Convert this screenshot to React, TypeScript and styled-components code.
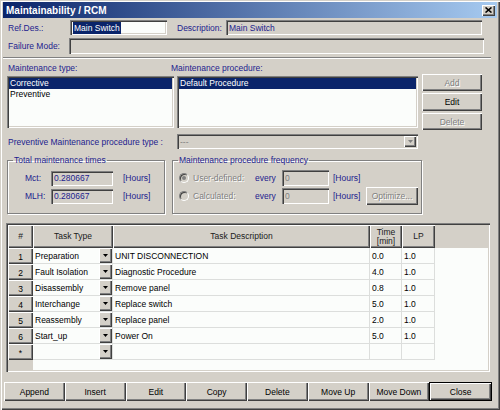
import React from "react";
import styled, { createGlobalStyle, css } from "styled-components";

const FACE = "#d4d0c8";
const NAVY = "#1c1c8e";
const SEL = "#0a246a";

const GlobalStyle = createGlobalStyle`
  html, body { margin: 0; padding: 0; background: ${FACE}; }
  body { font-family: "Liberation Sans", Arial, sans-serif; font-size: 8.5px; color: #000; }
  * { box-sizing: border-box; }
`;

const raised = css`
  box-shadow: inset 1px 1px 0 #fff, inset -1px -1px 0 #404040, inset -2px -2px 0 #808080;
`;
const sunken = css`
  box-shadow: inset 1px 1px 0 #808080, inset 2px 2px 0 #404040, inset -1px -1px 0 #fff,
    inset -2px -2px 0 ${FACE};
`;
const disabledText = css`
  color: #808080;
  text-shadow: 1px 1px 0 #fff;
`;

const Window = styled.div`
  width: 500px;
  height: 410px;
  background: ${FACE};
  padding: 2px 3px 0 3px;
  box-shadow: inset 1px 1px 0 ${FACE}, inset 2px 2px 0 #fff, inset -1px -1px 0 #404040,
    inset -2px -2px 0 #808080;
  display: flex;
  flex-direction: column;
  overflow: hidden;
`;

const TitleBar = styled.div`
  height: 16px;
  display: flex;
  align-items: center;
  justify-content: space-between;
  padding: 0 2px 0 3px;
  background: linear-gradient(to right, ${SEL}, #a6caf0);
  color: #fff;
  font-weight: bold;
  font-size: 10px;
`;

const CloseBtn = styled.div`
  width: 13px;
  height: 11px;
  background: ${FACE};
  ${raised};
  display: flex;
  align-items: center;
  justify-content: center;
`;

const Content = styled.div`
  padding-left: 4px;
  display: flex;
  flex-direction: column;
`;

const Row = styled.div<{ $h: number; $mt: number }>`
  display: flex;
  align-items: center;
  height: ${(p) => p.$h}px;
  margin-top: ${(p) => p.$mt}px;
`;

const Label = styled.span<{ $w?: number; $ml?: number }>`
  color: ${NAVY};
  width: ${(p) => (p.$w ? `${p.$w}px` : "auto")};
  margin-left: ${(p) => p.$ml || 0}px;
  padding-left: 1px;
  white-space: nowrap;
  flex-shrink: 0;
`;

const Field = styled.div<{ $w: number; $h: number; $white?: boolean; $dim?: boolean }>`
  width: ${(p) => p.$w}px;
  height: ${(p) => p.$h}px;
  flex-shrink: 0;
  background: ${(p) => (p.$white ? "#fbfdfb" : FACE)};
  ${sunken};
  display: flex;
  align-items: center;
  padding: 0 3px;
  color: ${(p) => (p.$dim ? "#808080" : NAVY)};
  white-space: nowrap;
  overflow: hidden;
`;

const Selected = styled.span`
  background: ${SEL};
  color: #fff;
  padding: 1px 1px;
`;

const Separator = styled.div`
  margin: 3px 0 0 -4px;
  width: 488px;
  height: 2px;
  border-top: 1px solid #808080;
  border-bottom: 1px solid #fff;
`;

const ListsRow = styled.div`
  display: flex;
  height: 56px;
  gap: 3px;
`;

const ListBox = styled.div<{ $w: number }>`
  width: ${(p) => p.$w}px;
  height: 52px;
  margin-top: 2px;
  background: #fbfdfb;
  ${sunken};
  padding: 2px;
  display: flex;
  flex-direction: column;
`;

const ListItem = styled.div<{ $sel?: boolean }>`
  height: 11px;
  line-height: 11px;
  padding-left: 1px;
  background: ${(p) => (p.$sel ? SEL : "transparent")};
  color: ${(p) => (p.$sel ? "#fff" : "#000")};
`;

const SideButtons = styled.div`
  margin-left: 1px;
  width: 60px;
  display: flex;
  flex-direction: column;
  gap: 2px;
`;

const Button = styled.div<{ $h?: number; $w?: number; $disabled?: boolean; $default?: boolean }>`
  height: ${(p) => p.$h || 18}px;
  width: ${(p) => (p.$w ? `${p.$w}px` : "auto")};
  flex-shrink: 0;
  background: ${FACE};
  display: flex;
  align-items: center;
  justify-content: center;
  white-space: nowrap;
  ${(p) =>
    p.$default
      ? css`
          border: 1px solid #000;
          ${raised};
        `
      : raised};
  ${(p) => (p.$disabled ? disabledText : "color: #000;")}
`;

const Combo = styled(Field)`
  justify-content: space-between;
  padding-right: 2px;
`;

const ComboArrow = styled.div`
  width: 12px;
  height: 11px;
  background: ${FACE};
  ${raised};
  display: flex;
  align-items: center;
  justify-content: center;
`;

const GroupsRow = styled.div`
  display: flex;
  gap: 7px;
  margin-top: 6px;
`;

const Group = styled.fieldset<{ $w: number }>`
  width: ${(p) => p.$w}px;
  height: 59px;
  margin: 0;
  padding: 0;
  min-width: 0;
  border: 1px solid #808080;
  box-shadow: inset 1px 1px 0 #fff, 1px 1px 0 #fff;
  display: flex;
  flex-direction: column;
  gap: 2px;
`;

const Legend = styled.legend`
  color: ${NAVY};
  line-height: 11px;
  padding: 0 1px;
  margin-left: 5px;
`;

const GroupRow = styled.div<{ $mt?: number; $pl: number }>`
  display: flex;
  align-items: center;
  height: 16px;
  padding-left: ${(p) => p.$pl}px;
  margin-top: ${(p) => p.$mt || 0}px;
`;

const Radio = styled.span<{ $on?: boolean }>`
  width: 10px;
  height: 10px;
  border-radius: 50%;
  background: ${FACE};
  border: 1px solid #808080;
  border-right-color: #fff;
  border-bottom-color: #fff;
  box-shadow: inset 1px 1px 0 #404040;
  flex-shrink: 0;
  &::after {
    content: "";
    display: ${(p) => (p.$on ? "block" : "none")};
    width: 4px;
    height: 4px;
    margin: 2px;
    border-radius: 50%;
    background: #808080;
  }
`;

const RadioText = styled.span<{ $w: number }>`
  width: ${(p) => p.$w}px;
  margin-left: 4px;
  ${disabledText};
`;

const Grid = styled.div`
  margin: 9px 0 0 -1px;
  width: 484px;
  height: 149px;
  ${sunken};
  padding: 2px 2px 2px 2px;
  background: #fbfdfb;
  display: flex;
  flex-direction: column;
`;

const HeadRow = styled.div`
  display: flex;
  height: 23px;
  background: ${FACE};
  flex-shrink: 0;
`;

const HeadCell = styled.div<{ $w: number }>`
  width: ${(p) => p.$w}px;
  flex-shrink: 0;
  ${raised};
  display: flex;
  align-items: center;
  justify-content: center;
  text-align: center;
  line-height: 9px;
  color: #202020;
`;

const GridBody = styled.div`
  flex: 1;
  background: linear-gradient(to right, ${FACE} 25px, #fbfdfb 25px);
  display: flex;
  flex-direction: column;
`;

const GridRow = styled.div`
  display: flex;
  height: 16px;
  flex-shrink: 0;
`;

const NumCell = styled.div`
  width: 25px;
  flex-shrink: 0;
  background: ${FACE};
  ${raised};
  display: flex;
  align-items: center;
  justify-content: center;
  padding-top: 1px;
`;

const Cell = styled.div<{ $w: number }>`
  width: ${(p) => p.$w}px;
  flex-shrink: 0;
  background: #fbfdfb;
  border-right: 1px solid #dcdedc;
  border-bottom: 1px solid #dcdedc;
  display: flex;
  align-items: center;
  padding-left: 2px;
  white-space: nowrap;
  overflow: hidden;
`;

const CellText = styled.span`
  flex: 1;
`;

const DropBtn = styled.div`
  width: 13px;
  height: 15px;
  flex-shrink: 0;
  background: ${FACE};
  ${raised};
  display: flex;
  align-items: center;
  justify-content: center;
`;

const ButtonBar = styled.div`
  margin: 10px 0 0 -3px;
  width: 488px;
  height: 19px;
  display: flex;
  & > * {
    flex: 1;
    height: 19px;
  }
`;

const Arrow = ({ color = "#000" }: { color?: string }) => (
  <svg width="5" height="3" viewBox="0 0 5 3">
    <polygon points="0,0 5,0 2.5,3" fill={color} />
  </svg>
);

const tasks = [
  ["1", "Preparation", "UNIT DISCONNECTION", "0.0", "1.0"],
  ["2", "Fault Isolation", "Diagnostic Procedure", "4.0", "1.0"],
  ["3", "Disassembly", "Remove panel", "0.8", "1.0"],
  ["4", "Interchange", "Replace switch", "5.0", "1.0"],
  ["5", "Reassembly", "Replace panel", "2.0", "1.0"],
  ["6", "Start_up", "Power On", "5.0", "1.0"],
  ["*", "", "", "", ""],
];

const bottomButtons = ["Append", "Insert", "Edit", "Copy", "Delete", "Move Up", "Move Down", "Close"];

export default function App() {
  return (
    <>
      <GlobalStyle />
      <Window>
        <TitleBar>
          <span>Maintainability / RCM</span>
          <CloseBtn>
            <svg width="7" height="6" viewBox="0 0 7 6">
              <path d="M0.5 0.5 L6.5 5.5 M6.5 0.5 L0.5 5.5" stroke="#000" strokeWidth="1.6" />
            </svg>
          </CloseBtn>
        </TitleBar>
        <Content>
          <Row $h={15} $mt={2}>
            <Label $w={63}>Ref.Des.:</Label>
            <Field $w={97} $h={15} $white>
              <Selected>Main Switch</Selected>
            </Field>
            <Label $w={50} $ml={9}>
              Description:
            </Label>
            <Field $w={256} $h={15}>
              Main Switch
            </Field>
          </Row>
          <Row $h={16} $mt={3}>
            <Label $w={62}>Failure Mode:</Label>
            <Field $w={415} $h={16} />
          </Row>
          <Separator />
          <Row $h={13} $mt={2}>
            <Label $w={163}>Maintenance type:</Label>
            <Label>Maintenance procedure:</Label>
          </Row>
          <ListsRow>
            <ListBox $w={167}>
              <ListItem $sel>Corrective</ListItem>
              <ListItem>Preventive</ListItem>
            </ListBox>
            <ListBox $w={241}>
              <ListItem $sel>Default Procedure</ListItem>
            </ListBox>
            <SideButtons>
              <Button $h={17} $disabled>
                Add
              </Button>
              <Button $h={18}>Edit</Button>
              <Button $h={17} $disabled>
                Delete
              </Button>
            </SideButtons>
          </ListsRow>
          <Row $h={15} $mt={4}>
            <Label $w={170}>Preventive Maintenance procedure type :</Label>
            <Combo $w={241} $h={15} $dim>
              <span>---</span>
              <ComboArrow>
                <Arrow color="#808080" />
              </ComboArrow>
            </Combo>
          </Row>
          <GroupsRow>
            <Group $w={158}>
              <Legend>Total maintenance times</Legend>
              <GroupRow $mt={4} $pl={16}>
                <Label $w={27}>Mct:</Label>
                <Field $w={62} $h={15}>
                  0.280667
                </Field>
                <Label $ml={9}>[Hours]</Label>
              </GroupRow>
              <GroupRow $pl={16}>
                <Label $w={27}>MLH:</Label>
                <Field $w={62} $h={15}>
                  0.280667
                </Field>
                <Label $ml={9}>[Hours]</Label>
              </GroupRow>
            </Group>
            <Group $w={250}>
              <Legend>Maintenance procedure frequency</Legend>
              <GroupRow $mt={4} $pl={6}>
                <Radio $on />
                <RadioText $w={61}>User-defined:</RadioText>
                <Label $w={28}>every</Label>
                <Field $w={47} $h={16} $dim>
                  0
                </Field>
                <Label $ml={3}>[Hours]</Label>
              </GroupRow>
              <GroupRow $pl={6}>
                <Radio />
                <RadioText $w={61}>Calculated:</RadioText>
                <Label $w={28}>every</Label>
                <Field $w={47} $h={16} $dim>
                  0
                </Field>
                <Label $ml={3} $w={34}>
                  [Hours]
                </Label>
                <Button $h={18} $w={52} $disabled>
                  Optimize...
                </Button>
              </GroupRow>
            </Group>
          </GroupsRow>
          <Grid>
            <HeadRow>
              <HeadCell $w={25}>#</HeadCell>
              <HeadCell $w={80}>Task Type</HeadCell>
              <HeadCell $w={257}>Task Description</HeadCell>
              <HeadCell $w={32}>
                Time
                <br />
                [min]
              </HeadCell>
              <HeadCell $w={33}>LP</HeadCell>
            </HeadRow>
            <GridBody>
              {tasks.map(([n, type, desc, time, lp]) => (
                <GridRow key={n}>
                  <NumCell>{n}</NumCell>
                  <Cell $w={80}>
                    <CellText>{type}</CellText>
                    <DropBtn>
                      <Arrow />
                    </DropBtn>
                  </Cell>
                  <Cell $w={257}>{desc}</Cell>
                  <Cell $w={32}>{time}</Cell>
                  <Cell $w={33}>{lp}</Cell>
                </GridRow>
              ))}
            </GridBody>
          </Grid>
          <ButtonBar>
            {bottomButtons.map((b) => (
              <Button key={b} $default={b === "Close"}>
                {b}
              </Button>
            ))}
          </ButtonBar>
        </Content>
      </Window>
    </>
  );
}
